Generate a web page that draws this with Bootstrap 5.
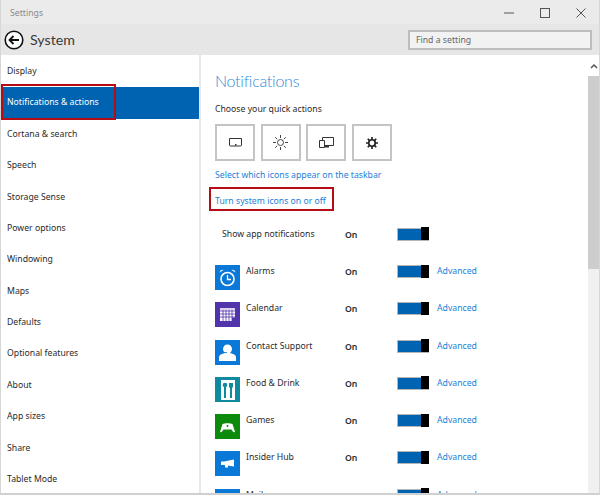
<!DOCTYPE html>
<html lang="en"><head><meta charset="utf-8"><title>Settings</title>
<link href="https://cdn.jsdelivr.net/npm/bootstrap@5.3.0/dist/css/bootstrap.min.css" rel="stylesheet">
<style>
html,body{height:497px;overflow:hidden;background:#fff}
body{font-family:"Noto Sans","Open Sans",sans-serif;font-size:8.7px;line-height:12px;color:#2b2b2b}
.win{height:495px;width:600px;border-left:1px solid #d6d6d6;border-right:1px solid #d6d6d6;border-bottom:2px solid #d0d0d0;overflow:hidden}
.ttl{height:24px;flex:none;background:#ebebeb;color:#8a8a8a;padding-left:9px;padding-top:1px}
.wctl{gap:26px;padding-right:13px}
.hdr{height:31px;flex:none;background:#e6e6e6;padding-left:3px;padding-right:7px}
.hname{font-family:Lato,sans-serif;font-size:14.2px;color:#3a3a3a;margin-left:6px}
.srch{width:184px;height:20px;border:2px solid #bdbdbd;background:#f2f2f2;color:#666;padding-left:6px;line-height:16px;margin:0}
.side{width:200px;flex:none;border-right:2px solid #e8e8e8;padding-top:1px}
.sitem{height:31.38px;padding-left:6px;line-height:31px;white-space:nowrap}
.sitem.on{background:#0063b1;color:#fff;position:relative}
.redmark{position:absolute;border:2px solid #b50d14;pointer-events:none}
.on .redmark{left:0;top:-3px;width:115px;height:36px}
.main{flex:1;padding:0 0 0 14px;overflow:hidden;min-width:0}
.ptitle{font-family:Lato,sans-serif;font-size:16px;letter-spacing:-.25px;line-height:22px;color:#2f8ad8;margin:15px 0 0;font-weight:300}
.sub{margin:11px 0 0}
.qa{gap:5.7px;margin-top:9px}
.qbtn{width:40px;height:37px;border:2px solid #c4c4c4;background:#fff}
.lnk{color:#1a7fd8;text-decoration:none}
.firstlnk{margin-top:8px;height:12px}
.boxlnk{display:inline-block;border:2px solid #b50d14;margin:6px 0 0 -6px;padding:7px 6px 2px 4px;height:24px;line-height:11px}
.aprow{height:37.3px;flex:none}
.icoslot{width:25px;height:25px;flex:none;margin-right:6px}
.nm{width:99px;flex:none}
.stat{width:52px;flex:none;font-weight:600;padding-top:1px}
.tog{width:32px;height:13px;background:#0063b1;border:1.5px solid #b5b5b5;border-right:0;position:relative;flex:none;margin-right:8px}
.tog::after{content:"";position:absolute;right:0;top:-1.5px;width:8px;height:13px;background:#000}
.sbar{width:11px;flex:none;background:#f0f0f0}
.sup{height:21px;background:#fff}
.sthumb{height:193px;background:#cdcdcd}
.ovr{overflow:hidden;min-height:0}
.rows{margin-top:16px}
.showrow{height:30px;padding-left:7px}
.showrow .nm{width:123px}
</style></head><body>
<div class="win d-flex flex-column">
 <div class="ttl d-flex align-items-center justify-content-between">
  <span>Settings</span>
  <div class="wctl d-flex align-items-center">
   <svg width="10" height="10" viewBox="0 0 10 10"><path d="M0 5h10" stroke="#555" fill="none"/></svg>
   <svg width="10" height="10" viewBox="0 0 10 10"><rect x=".5" y=".5" width="9" height="9" stroke="#555" fill="none"/></svg>
   <svg width="10" height="10" viewBox="0 0 10 10"><path d="M.5.5l9 9M9.5.5l-9 9" stroke="#555" fill="none"/></svg>
  </div>
 </div>
 <div class="hdr d-flex align-items-center justify-content-between">
  <div class="d-flex align-items-center">
   <svg width="20" height="20" viewBox="0 0 20 20"><circle cx="10" cy="10" r="8.8" fill="#fff" stroke="#111" stroke-width="1.600"/><path d="M15 10H6M9.500 6L5.500 10l4 4" fill="none" stroke="#111" stroke-width="1.800"/></svg>
   <span class="hname">System</span>
  </div>
  <div class="srch">Find a setting</div>
 </div>
 <div class="d-flex flex-grow-1 ovr">
  <div class="side">
   <div class="sitem">Display</div>
   <div class="sitem on">Notifications &amp; actions<span class="redmark"></span></div>
   <div class="sitem">Cortana &amp; search</div>
   <div class="sitem">Speech</div>
   <div class="sitem">Storage Sense</div>
   <div class="sitem">Power options</div>
   <div class="sitem">Windowing</div>
   <div class="sitem">Maps</div>
   <div class="sitem">Defaults</div>
   <div class="sitem">Optional features</div>
   <div class="sitem">About</div>
   <div class="sitem">App sizes</div>
   <div class="sitem">Share</div>
   <div class="sitem">Tablet Mode</div>
  </div>
  <div class="main">
   <h1 class="ptitle">Notifications</h1>
   <p class="sub">Choose your quick actions</p>
   <div class="qa d-flex">
    <div class="qbtn d-flex align-items-center justify-content-center"><svg width="15" height="13" viewBox="0 0 15 13"><path d="M1.500 2.500h12v6.500a1 1 0 0 1-1 1h-10a1 1 0 0 1-1-1z" fill="none" stroke="#333"/><path d="M7 8h1.500v1.500H7z" fill="#333"/></svg></div>
    <div class="qbtn d-flex align-items-center justify-content-center"><svg width="15" height="15" viewBox="0 0 15 15"><circle cx="7.500" cy="7.500" r="3" fill="none" stroke="#444"/><path d="M7.500 0v3M7.500 12v3M0 7.500h3M12 7.500h3M2.200 2.200l2 2M10.800 10.800l2 2M2.200 12.800l2-2M10.800 4.200l2-2" stroke="#444" fill="none"/></svg></div>
    <div class="qbtn d-flex align-items-center justify-content-center"><svg width="15" height="13" viewBox="0 0 15 13"><path d="M3.500 1.500h11v8h-11z" fill="none" stroke="#333"/><path d="M.5 4.500h5v7h-5z" fill="#fff" stroke="#333"/><path d="M6 10h4v1.500H6z" fill="#333"/></svg></div>
    <div class="qbtn d-flex align-items-center justify-content-center"><svg width="12" height="12" viewBox="0 0 13 13"><circle cx="6.500" cy="6.500" r="3.500" fill="none" stroke="#222" stroke-width="1.800"/><path d="M6.500 0v3M6.500 10v3M0 6.500h3M10 6.500h3M1.900 1.900l2 2M9.100 9.100l2 2M1.900 11.100l2-2M9.100 3.900l2-2" stroke="#222" stroke-width="1.800" fill="none"/></svg></div>
   </div>
   <div class="firstlnk"><a href="#" class="lnk">Select which icons appear on the taskbar</a></div>
   <a href="#" class="lnk boxlnk">Turn system icons on or off</a>
   <div class="showrow d-flex align-items-center mt-2">
    <div class="nm">Show app notifications</div><div class="stat">On</div><div class="tog"></div>
   </div>
   <div class="rows">
    <div class="aprow d-flex align-items-start">
     <svg class="icoslot" viewBox="0 0 25 25"><rect width="25" height="25" fill="#0a78d7"/><circle cx="12.500" cy="14" r="6.500" fill="none" stroke="#fff" stroke-width="1.600"/><path d="M12.500 10v4.500h3.500" fill="none" stroke="#fff" stroke-width="1.300"/><path d="M4.500 7.500a3 3 0 0 1 4-2.500zM20.500 7.500a3 3 0 0 0-4-2.500z" fill="#fff"/></svg>
     <div class="nm">Alarms</div><div class="stat">On</div><div class="tog"></div><a href="#" class="lnk">Advanced</a>
    </div>
    <div class="aprow d-flex align-items-start">
     <svg class="icoslot" viewBox="0 0 25 25"><rect width="25" height="25" fill="#5133ab"/><rect x="5" y="6" width="15" height="13" fill="#fff"/><path d="M8 6v13M11 6v13M14 6v13M17 6v13M5 9h15M5 12h15M5 15h15" stroke="#5133ab" stroke-width=".8"/><rect x="5" y="6" width="15" height="2" fill="#d8d0ee"/><rect x="17" y="15.500" width="3" height="3.500" fill="#5133ab"/></svg>
     <div class="nm">Calendar</div><div class="stat">On</div><div class="tog"></div><a href="#" class="lnk">Advanced</a>
    </div>
    <div class="aprow d-flex align-items-start">
     <svg class="icoslot" viewBox="0 0 25 25"><rect width="25" height="25" fill="#0a78d7"/><circle cx="12.500" cy="9" r="4.500" fill="#fff"/><path d="M4 21v-3.500c0-3 3.500-4.500 8.500-4.500s8.500 1.500 8.500 4.500V21z" fill="#fff"/><path d="M7.500 8a5 5 0 0 1 10 0M8 12.500h4" stroke="#0a78d7" fill="none" stroke-width=".8"/></svg>
     <div class="nm">Contact Support</div><div class="stat">On</div><div class="tog"></div><a href="#" class="lnk">Advanced</a>
    </div>
    <div class="aprow d-flex align-items-start">
     <svg class="icoslot" viewBox="0 0 25 25"><rect width="25" height="25" fill="#108a9e"/><rect x="6" y="3" width="14" height="20" fill="#fff"/><path d="M10 7v14" stroke="#108a9e" stroke-width="2"/><circle cx="10" cy="8" r="2.300" fill="#108a9e"/><path d="M16 7v14" stroke="#108a9e" stroke-width="2"/><path d="M14 6h4v4l-2 2-2-2z" fill="#108a9e"/></svg>
     <div class="nm">Food &amp; Drink</div><div class="stat">On</div><div class="tog"></div><a href="#" class="lnk">Advanced</a>
    </div>
    <div class="aprow d-flex align-items-start">
     <svg class="icoslot" viewBox="0 0 25 25"><rect width="25" height="25" fill="#0b8a0b"/><path d="M5 18l2.500-8c2-1 8-1 10 0l2.500 8c-1 .8-2.500-.5-3.500-2.500h-8c-1 2-2.500 3.300-3.500 2.500z" fill="#fff"/><circle cx="12.500" cy="12" r="1" fill="#0b8a0b"/></svg>
     <div class="nm">Games</div><div class="stat">On</div><div class="tog"></div><a href="#" class="lnk">Advanced</a>
    </div>
    <div class="aprow d-flex align-items-start">
     <svg class="icoslot" viewBox="0 0 25 25"><rect width="25" height="25" fill="#0a78d7"/><path d="M6 10.500h3l10-2v7l-10-1.500H6z" fill="#fff"/><rect x="10" y="14" width="3" height="2.500" fill="#fff"/></svg>
     <div class="nm">Insider Hub</div><div class="stat">On</div><div class="tog"></div><a href="#" class="lnk">Advanced</a>
    </div>
    <div class="aprow d-flex align-items-start">
     <svg class="icoslot" viewBox="0 0 25 25"><rect width="25" height="25" fill="#0a78d7"/><rect x="5" y="6" width="15" height="12" fill="#fff"/></svg>
     <div class="nm">Mail</div><div class="stat">On</div><div class="tog"></div><a href="#" class="lnk">Advanced</a>
    </div>
   </div>
  </div>
  <div class="sbar">
   <div class="sup d-flex justify-content-center"><svg width="8" height="21" viewBox="0 0 8 21"><path d="M1 13l3-3 3 3" fill="none" stroke="#555" stroke-width="1.500"/></svg></div>
   <div class="sthumb"></div>
  </div>
 </div>
</div>
</body></html>
